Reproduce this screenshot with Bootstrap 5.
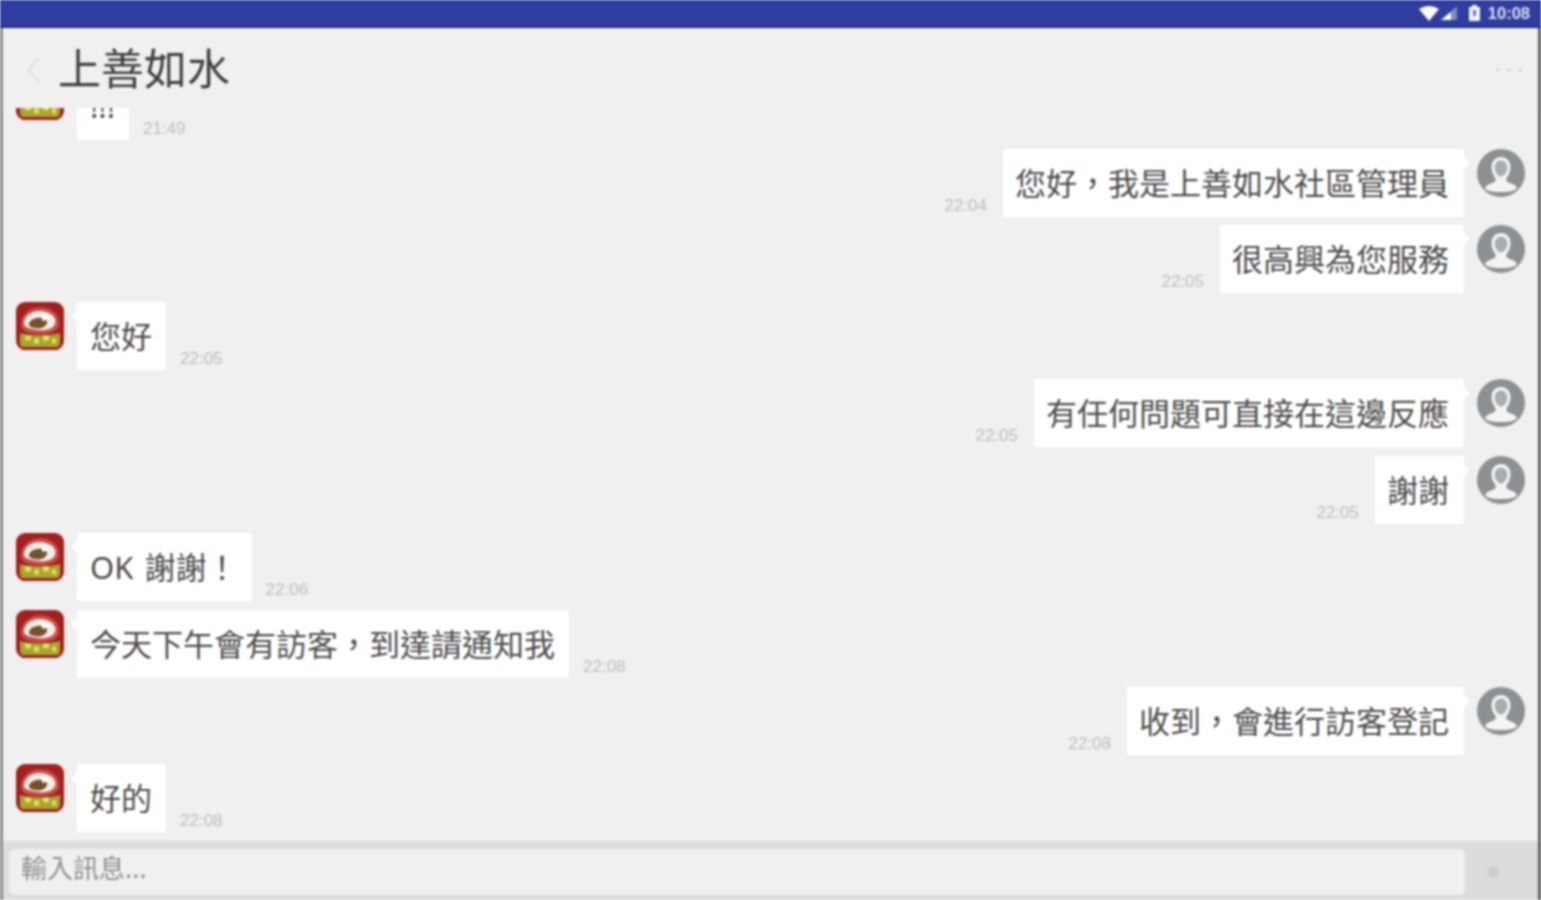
<!DOCTYPE html>
<html lang="zh-Hant">
<head>
<meta charset="UTF-8">
<title>上善如水</title>
<link href="https://cdn.jsdelivr.net/npm/bootstrap@5.3.0/dist/css/bootstrap.min.css" rel="stylesheet">
<style>
    html, body { height: 100%; overflow: hidden; }
    body {
        font-family: "Liberation Sans", "Noto Sans CJK TC", sans-serif;
        background: #f0f0f0;
        color: #444;
    }
    .app-shell { height: 900px; filter: blur(.9px); }
    .status-strip {
        height: 28px;
        flex: none;
        background: #2f3e9e;
        border-bottom: 2px solid #1a2a92;
        padding-right: 11px;
        color: #dfe2f3;
        font-size: 16.5px;
        font-weight: 700;
    }
    .wifi-icon { margin-right: 2px; }
    .signal-icon { margin-right: 12px; }
    .chat-frame {
        border-left: 3px solid #8c8c8c;
        border-right: 3px solid #5c5c5c;
        min-height: 0;
    }
    .chat-head { height: 80px; padding: 0 16px 0 23px; flex: none; background: #f0f0f0; position: relative; z-index: 2; }
    .chat-head svg { margin-top: 3px; }
    .chat-title { font-size: 43px; font-weight: 400; line-height: 1; margin: -3px 0 0 18px; color: #3f3f3f; font-family: "Noto Sans CJK TC", sans-serif; }
    .chat-list { min-height: 0; overflow: hidden; padding: 0 13px 8.300px; gap: 8.900px; }
    .msg-row { height: 68px; flex: none; }
    .msg-row.mine { flex-direction: row-reverse; }
    .chat-bubble {
        position: relative;
        height: 68px;
        background: #fff;
        font-size: 31px;
        line-height: 68px;
        padding: 0 14px 0 13px;
        white-space: nowrap;
        font-family: "Noto Sans", "Noto Sans CJK TC", sans-serif;
        color: #4c4c4c;
        border-radius: 2px;
        margin-left: 13px;
    }
    .chat-bubble::before {
        content: "";
        position: absolute;
        left: -6px;
        top: 8px;
        border-style: solid;
        border-width: 6px 6px 6px 0;
        border-color: transparent #fff transparent transparent;
    }
    .mine .chat-bubble { margin: 0 13px 0 0; padding: 0 15px 0 12px; }
    .mine .chat-bubble::before {
        left: auto;
        right: -6px;
        border-width: 6px 0 6px 6px;
        border-color: transparent transparent transparent #fff;
    }
    .msg-time { font-size: 17px; line-height: 1; color: #bdbdbd; margin: 48px 0 0 14px; }
    .mine .msg-time { margin: 48px 16px 0 0; }
    .face { width: 48px; height: 48px; flex: none; display: block; }
    .input-strip { height: 60px; flex: none; background: #dcdcdc; padding: 6px 0 5px 6px; border-top: 3px solid #e4e4e4; }
    .input-strip .form-control {
        width: 1456px;
        height: 46px;
        background: #f0f0f0;
        border: 0;
        border-radius: 5px;
        font-size: 26px;
        padding: 0 12px 11px;
        font-family: "Noto Sans CJK TC", sans-serif;
        box-shadow: none;
    }
    .input-strip .form-control::placeholder { color: #8f8f8f; }
    .send-mark { margin: 16px 0 0 20px; }
</style>
</head>
<body>
<svg width="0" height="0" class="position-absolute">
    <defs>
        <symbol id="face-shop" viewBox="0 0 48 48">
            <rect width="48" height="48" rx="9" fill="#a4201f"/>
            <path d="M5 22C6 9 19 3 30 6c9 2 14 9 13 17-1 6-9 9-19 9-11 0-20-3-19-10z" fill="#c9504a"/>
            <path d="M8 20c2-9 12-13 22-10 7 2 11 7 9 12-2 5-9 7-17 6-9-1-15-3-14-8z" fill="#f2ede6"/>
            <path d="M13 22c1-5 8-7 14-6 4 1 5 4 3 7-2 3-7 4-11 3-4-.5-6.500-2-6-4z" fill="#77502a"/>
            <path d="M24 13c4-1 9 0 11 3l-8 3z" fill="#fff"/>
            <path d="M4 31c8 3 32 3 40 0v10c-1 4-4 7-8 7H12c-4 0-7-3-8-7z" fill="#a8a52f"/>
            <path d="M9 36h6m3 3h5m4-3h6m3 3h4" stroke="#e6dc62" stroke-width="5"/>
            <path d="M6 46.500h36" stroke="#a4201f" stroke-width="3"/>
        </symbol>
        <symbol id="face-staff" viewBox="0 0 48 48">
            <circle cx="24" cy="24" r="24" fill="#8b9092"/>
            <path d="M24 8c6 0 9.500 4.500 9.500 10.500 0 4.500-2 8-4 10.500v2.500c0 2 6 3 9.500 5.500l.8 2.700C36 42.500 30 43 24 43s-12-.5-15.800-3.300l.8-2.700c3.500-2.500 9.500-3.500 9.500-5.500V29c-2-2.500-4-6-4-10.500C14.500 12.500 18 8 24 8z" fill="#f4f4f4"/>
            <path d="M24 11.500c3.800 0 6.300 3 6.300 7.300 0 4.500-3.300 8.700-6.300 8.700s-6.300-4.200-6.300-8.700c0-4.300 2.500-7.300 6.300-7.300z" fill="#a9adae"/>
        </symbol>
    </defs>
</svg>

<div class="app-shell d-flex flex-column">
    <div class="status-strip d-flex align-items-center justify-content-end">
        <svg class="wifi-icon" width="20" height="15" viewBox="0 0 20 15"><path d="M0 3Q10-3 20 3L10 15z" fill="#fff"/></svg>
        <svg class="signal-icon" width="16" height="14" viewBox="0 0 16 14"><path d="M16 0v14H0z" fill="#7f89c6"/><path d="M10 6v8H0z" fill="#fff"/></svg>
        <svg class="me-2" width="11" height="16" viewBox="0 0 11 16"><path d="M3 0h5v2h3v14H0V2h3z" fill="#f3f4fb"/><rect x="4" y="5" width="3" height="6" fill="#6c78bd"/></svg>
        <span>10:08</span>
    </div>

    <div class="chat-frame d-flex flex-column flex-grow-1">
        <div class="chat-head d-flex align-items-center">
            <svg width="14" height="26" viewBox="0 0 14 26"><path d="M13 1 2 13l11 12" fill="none" stroke="#dedede" stroke-width="2"/></svg>
            <h1 class="chat-title">上善如水</h1>
            <svg class="ms-auto" width="26" height="4" viewBox="0 0 26 4"><path d="M0 2h4m7 0h4m7 0h4" stroke="#d9d9d9" stroke-width="3"/></svg>
        </div>

        <div class="chat-list d-flex flex-column justify-content-end flex-grow-1" id="chatList"></div>

        <div class="input-strip d-flex">
            <input type="text" class="form-control" placeholder="輸入訊息...">
            <svg class="send-mark" width="16" height="14" viewBox="0 0 16 14"><circle cx="8" cy="7" r="6" fill="#cfcfcf"/></svg>
        </div>
    </div>
</div>

<script>
const messages = [
    ['them', '!!!', '21:49'],
    ['mine', '您好，我是上善如水社區管理員', '22:04'],
    ['mine', '很高興為您服務', '22:05'],
    ['them', '您好', '22:05'],
    ['mine', '有任何問題可直接在這邊反應', '22:05'],
    ['mine', '謝謝', '22:05'],
    ['them', 'OK&nbsp;&#8202;謝謝！', '22:06'],
    ['them', '今天下午會有訪客，到達請通知我', '22:08'],
    ['mine', '收到，會進行訪客登記', '22:08'],
    ['them', '好的', '22:08']
];

document.getElementById('chatList').innerHTML = messages.map(m => {
    const icon = m[0] === 'mine' ? 'face-staff' : 'face-shop';
    return `<div class="msg-row d-flex ${m[0] === 'mine' ? 'mine' : ''}">
        <svg class="face"><use href="#${icon}"/></svg>
        <div class="chat-bubble">${m[1]}</div>
        <div class="msg-time">${m[2]}</div>
    </div>`;
}).join('');
</script>
<script src="https://cdn.jsdelivr.net/npm/bootstrap@5.3.0/dist/js/bootstrap.bundle.min.js"></script>
</body>
</html>
